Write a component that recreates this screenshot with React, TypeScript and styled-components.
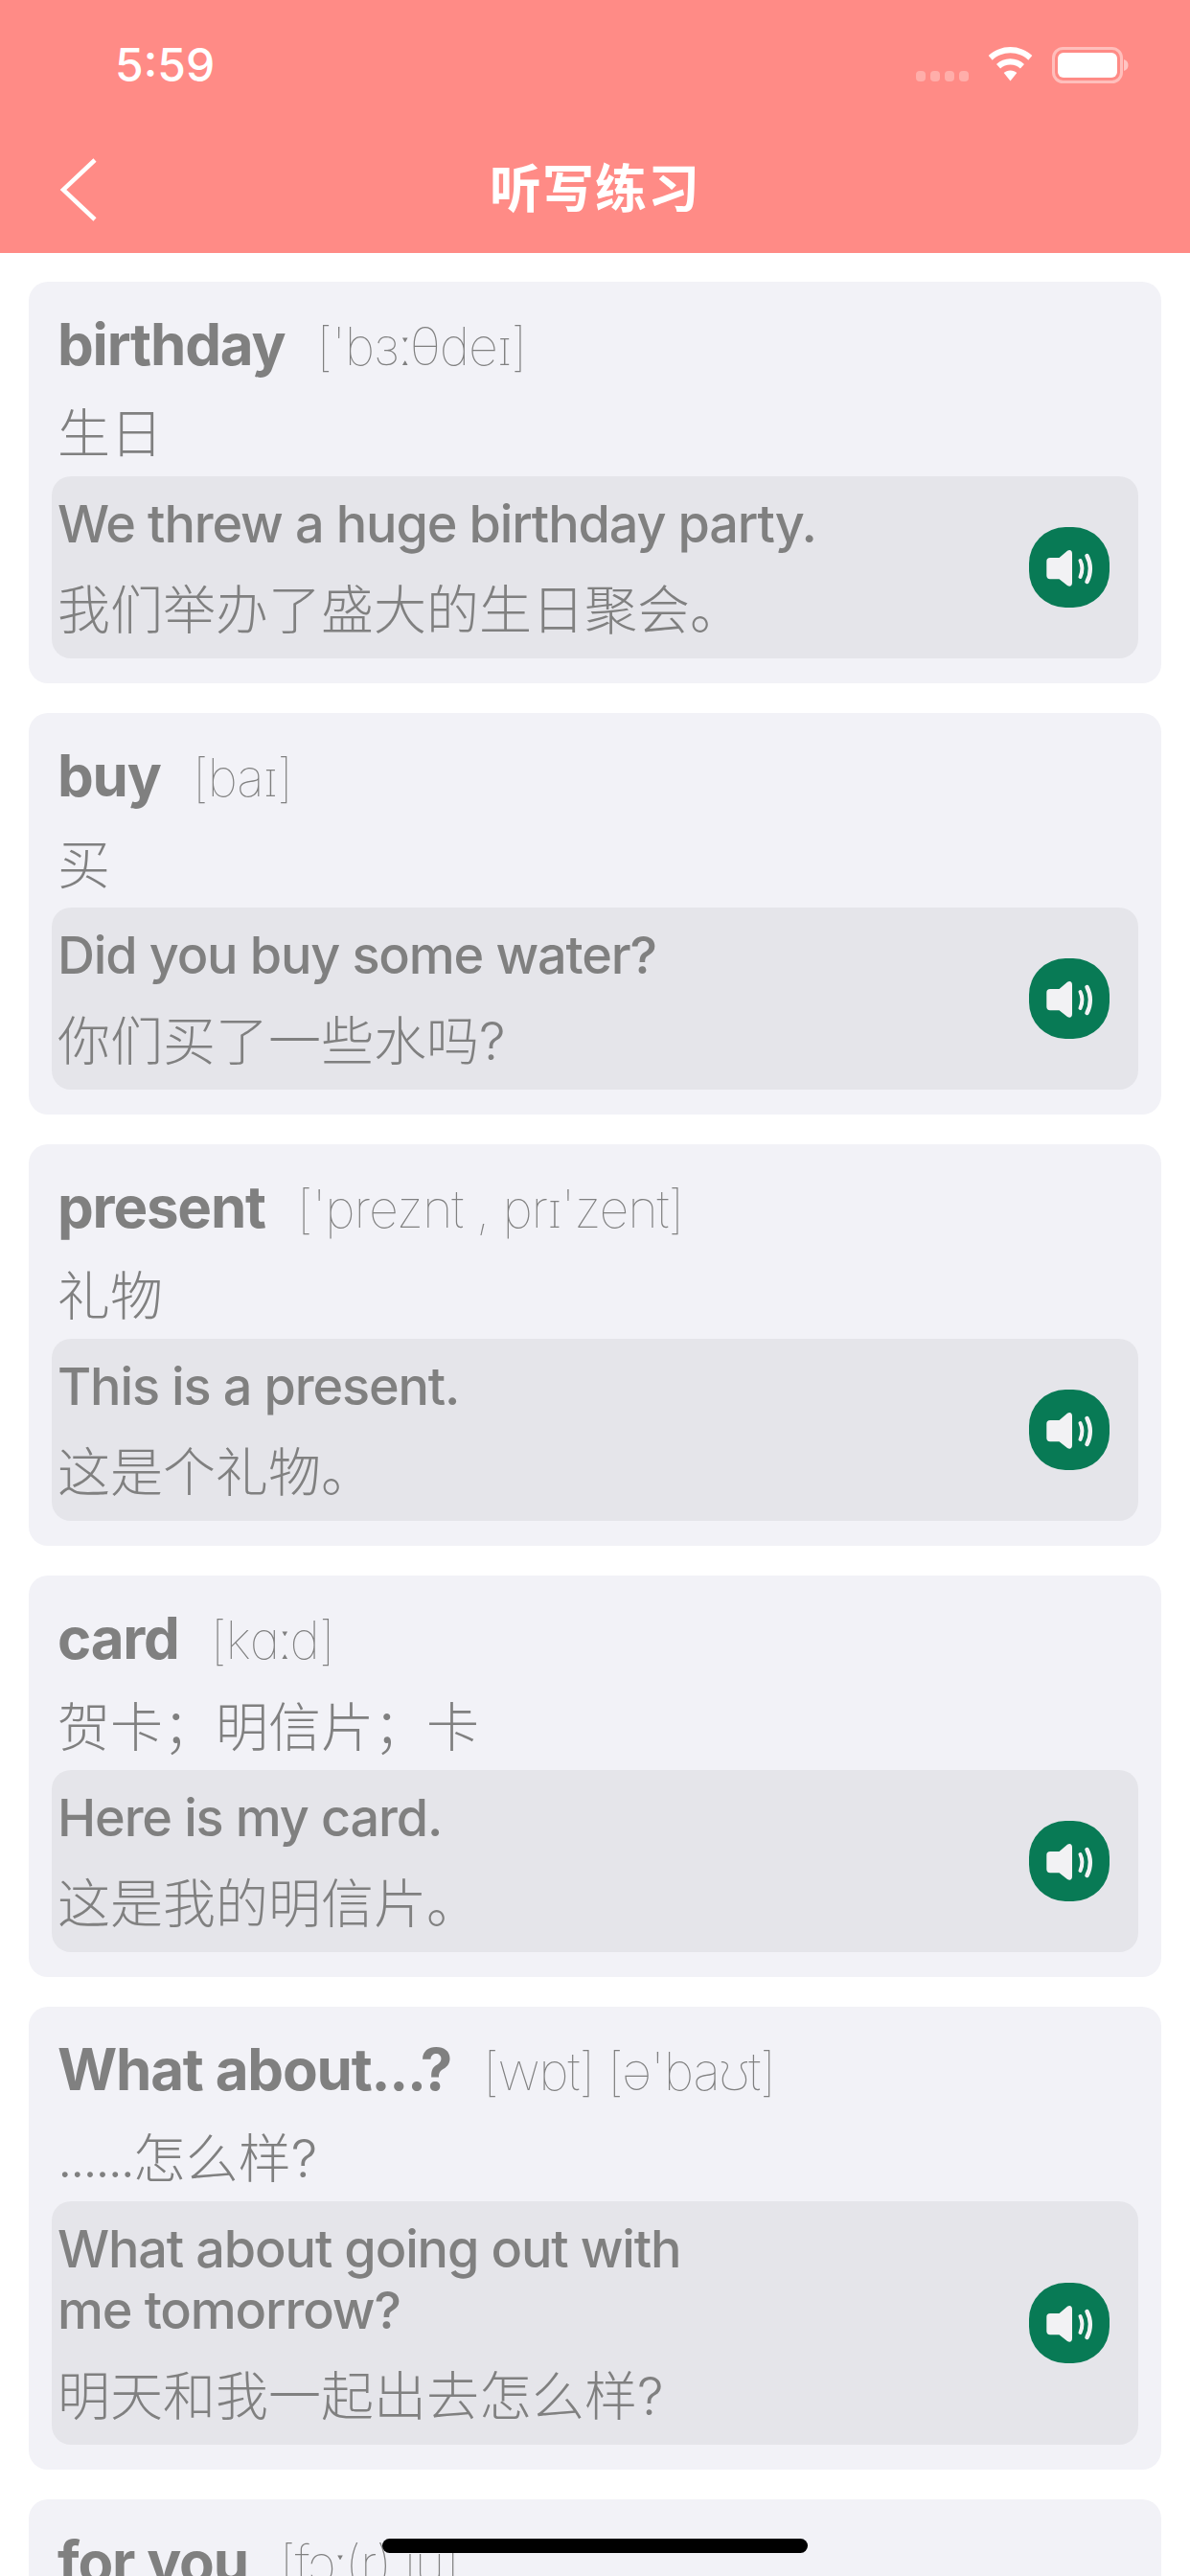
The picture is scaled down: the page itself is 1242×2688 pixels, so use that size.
import styled, { createGlobalStyle } from "styled-components";

const GlobalStyle = createGlobalStyle`
	html, body {
		margin: 0;
		padding: 0;
		background: #ffffff;
	}
`;

const Page = styled.div`
	position: relative;
	width: 1242px;
	height: 2688px;
	overflow: hidden;
	background: #ffffff;
	font-family: Inter, "Noto Sans CJK SC", sans-serif;
`;

const Header = styled.header`
	height: 264px;
	background: #ff8b86;
	color: #ffffff;
	display: flex;
	flex-direction: column;
`;

const StatusBar = styled.div`
	height: 132px;
	display: flex;
	align-items: flex-start;
	justify-content: space-between;
	padding: 36px 64px 0 120px;
	box-sizing: border-box;
`;

const Time = styled.span`
	font-size: 48px;
	line-height: 64px;
	font-weight: 500;
`;

const StatusIcons = styled.div`
	display: flex;
	align-items: flex-start;
	gap: 20px;
	margin-top: 13px;
`;

const NavBar = styled.div`
	height: 132px;
	display: grid;
	grid-template-columns: 160px 1fr 160px;
	align-items: center;
`;

const BackButton = styled.div`
	display: flex;
	padding-left: 62px;
`;

const NavTitle = styled.h1`
	margin: 0;
	text-align: center;
	font-size: 54px;
	line-height: 64px;
	font-weight: 700;
	letter-spacing: 1px;
`;

const List = styled.main`
	display: flex;
	flex-direction: column;
	gap: 31px;
	padding: 30px 30px 0;
`;

const Card = styled.section`
	background: #f2f2f7;
	border-radius: 20px;
	padding: 0 24px 26px;
	color: #808080;
`;

const WordRow = styled.div`
	display: flex;
	align-items: baseline;
	gap: 33px;
	height: 113px;
	padding: 19px 6px 0;
	box-sizing: border-box;
`;

const Word = styled.span`
	font-size: 60px;
	line-height: 92px;
	font-weight: 700;
	letter-spacing: -1.2px;
`;

const Phonetic = styled.span`
	font-family: Inter, "Noto Sans", sans-serif;
	font-size: 54px;
	line-height: 92px;
	font-weight: 100;
	letter-spacing: -1.2px;
`;

const Meaning = styled.div`
	height: 90px;
	padding: 0 6px;
	font-size: 55px;
	line-height: 90px;
	font-weight: 300;
`;

const Lead = styled.span`
	letter-spacing: -2.4px;
`;

const ExampleBox = styled.div`
	display: flex;
	align-items: center;
	justify-content: space-between;
	background: #e5e5ea;
	border-radius: 20px;
	padding: 0 30px 0 6px;
`;

const ExampleText = styled.div`
	display: flex;
	flex-direction: column;
	padding: 18px 0 8px;
`;

const Sentence = styled.div`
	font-size: 54px;
	line-height: 64px;
	font-weight: 500;
	letter-spacing: -1.15px;
	white-space: pre-line;
`;

const Translation = styled.div`
	margin-top: 14px;
	font-size: 55px;
	line-height: 86px;
	font-weight: 300;
	height: 86px;
`;

const PlayButton = styled.div`
	width: 84px;
	height: 84px;
	flex: none;
	border-radius: 38px;
	background: #087a55;
	display: flex;
`;

const HomeBar = styled.div`
	position: absolute;
	left: 399px;
	top: 2649px;
	width: 444px;
	height: 15px;
	border-radius: 8px;
	background: #000000;
`;

type Entry = {
	word: string;
	phonetic: string;
	lead?: string;
	meaning: string;
	sentence: string;
	translation: string;
};

const entries: Entry[] = [
	{
		word: "birthday",
		phonetic: "['bɜːθdeɪ]",
		meaning: "生日",
		sentence: "We threw a huge birthday party.",
		translation: "我们举办了盛大的生日聚会。",
	},
	{
		word: "buy",
		phonetic: "[baɪ]",
		meaning: "买",
		sentence: "Did you buy some water?",
		translation: "你们买了一些水吗?",
	},
	{
		word: "present",
		phonetic: "['preznt , prɪ'zent]",
		meaning: "礼物",
		sentence: "This is a present.",
		translation: "这是个礼物。",
	},
	{
		word: "card",
		phonetic: "[kɑːd]",
		meaning: "贺卡；明信片；卡",
		sentence: "Here is my card.",
		translation: "这是我的明信片。",
	},
	{
		word: "What about...?",
		phonetic: "[wɒt] [ə'baʊt]",
		lead: "......",
		meaning: "怎么样?",
		sentence: "What about going out with\nme tomorrow?",
		translation: "明天和我一起出去怎么样?",
	},
	{
		word: "for you",
		phonetic: "[fɔː(r) ju]",
		meaning: "给你",
		sentence: "This is for you.",
		translation: "这是给你的。",
	},
];

function SpeakerIcon() {
	return (
		<svg width="84" height="84" viewBox="0 0 84 84" fill="none">
			<path
				d="M22 32h9.5L40 24.8c2.6-1.6 5-.6 5 3V58c0 3.6-2.4 4.6-5 3l-8.500-6.800H22c-2.400 0-3.700-1.300-3.700-3.700V35.700c0-2.400 1.300-3.700 3.700-3.700z"
				fill="#f2f2f4"
			/>
			<path d="M53.500 35c2.600 5.400 2.600 11 0 17" stroke="#f2f2f4" strokeWidth="4" strokeLinecap="round" />
			<path d="M60.500 30c4.400 8.400 4.400 18.600 0 27" stroke="#f2f2f4" strokeWidth="4.500" strokeLinecap="round" />
		</svg>
	);
}

function WifiIcon() {
	return (
		<svg width="47" height="36" viewBox="0 0 47 36" fill="#ffffff">
			<path d="M23.500 0C14.700 0 6.800 3.400.7 9.100l4 4.600C9.500 9.100 16.100 6.300 23.500 6.300s14 2.800 18.800 7.400l4-4.600C40.200 3.400 32.300 0 23.500 0z" />
			<path d="M23.500 12.200c-5.600 0-10.700 2.200-14.500 5.700l4.100 4.600c2.700-2.500 6.400-4 10.400-4s7.700 1.500 10.400 4l4.100-4.600c-3.800-3.500-8.900-5.700-14.500-5.700z" />
			<path d="M23.500 24.500c-2.700 0-5 1-6.800 2.600l6.800 8.400 6.800-8.400c-1.800-1.600-4.100-2.600-6.800-2.600z" />
		</svg>
	);
}

function BatteryIcon() {
	return (
		<svg width="80" height="38" viewBox="0 0 80 38" fill="none">
			<rect x="1.500" y="1.500" width="71" height="35" rx="10" stroke="#ffffff" strokeOpacity="0.45" strokeWidth="3" />
			<rect x="6" y="6" width="62" height="26" rx="6" fill="#ffffff" />
			<path d="M75 13c3 1 4.500 3 4.500 6s-1.500 5-4.500 6z" fill="#ffffff" fillOpacity="0.5" />
		</svg>
	);
}

function SignalDots() {
	return (
		<svg width="55" height="36" viewBox="0 0 55 36" fill="#ffffff" fillOpacity="0.3">
			<rect x="0" y="25" width="10" height="11" rx="4" />
			<rect x="15" y="25" width="10" height="11" rx="4" />
			<rect x="30" y="25" width="10" height="11" rx="4" />
			<rect x="45" y="25" width="10" height="11" rx="4" />
		</svg>
	);
}

function BackIcon() {
	return (
		<svg width="40" height="66" viewBox="0 0 40 66" fill="none">
			<path d="M37 2 4 33l33 31" stroke="#ffffff" strokeWidth="4.500" />
		</svg>
	);
}

function App() {
	return (
		<Page>
			<GlobalStyle />
			<Header>
				<StatusBar>
					<Time>5:59</Time>
					<StatusIcons>
						<SignalDots />
						<WifiIcon />
						<BatteryIcon />
					</StatusIcons>
				</StatusBar>
				<NavBar>
					<BackButton>
						<BackIcon />
					</BackButton>
					<NavTitle>听写练习</NavTitle>
				</NavBar>
			</Header>
			<List>
				{entries.map((entry) => (
					<Card key={entry.word}>
						<WordRow>
							<Word>{entry.word}</Word>
							<Phonetic>{entry.phonetic}</Phonetic>
						</WordRow>
						<Meaning>
							{entry.lead && <Lead>{entry.lead}</Lead>}
							{entry.meaning}
						</Meaning>
						<ExampleBox>
							<ExampleText>
								<Sentence>{entry.sentence}</Sentence>
								<Translation>{entry.translation}</Translation>
							</ExampleText>
							<PlayButton>
								<SpeakerIcon />
							</PlayButton>
						</ExampleBox>
					</Card>
				))}
			</List>
			<HomeBar />
		</Page>
	);
}

export default App;
